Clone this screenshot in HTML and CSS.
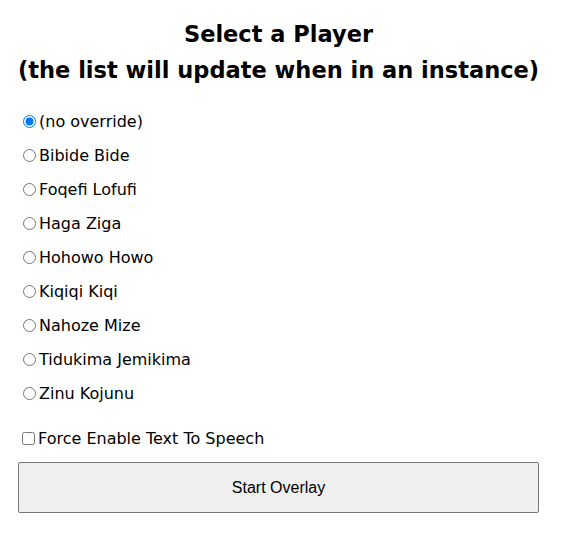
FILE: index.html
```html
<!DOCTYPE html>
<html>
<head>
<meta charset="utf-8">
<link rel="stylesheet" href="styles.css">
</head>
<body>
<div class="page">
  <h2 class="title">Select a Player<br>(the list will update when in an instance)</h2>
  <div class="players">
    <label class="row"><input type="radio" name="p" checked>(no override)</label>
    <label class="row"><input type="radio" name="p">Bibide Bide</label>
    <label class="row"><input type="radio" name="p">Foqefi Lofufi</label>
    <label class="row"><input type="radio" name="p">Haga Ziga</label>
    <label class="row"><input type="radio" name="p">Hohowo Howo</label>
    <label class="row"><input type="radio" name="p">Kiqiqi Kiqi</label>
    <label class="row"><input type="radio" name="p">Nahoze Mize</label>
    <label class="row"><input type="radio" name="p">Tidukima Jemikima</label>
    <label class="row"><input type="radio" name="p">Zinu Kojunu</label>
  </div>
  <label class="check"><input type="checkbox">Force Enable Text To Speech</label>
  <button class="start">Start Overlay</button>
</div>
</body>
</html>
```
FILE: styles.css
```css
html, body { margin: 0; padding: 0; background: #fff; }
body {
  font-family: "DejaVu Sans", "Noto Sans", sans-serif;
  color: #000;
}
.page {
  width: 521px;
  padding: 0 0 0 18px;
  display: flex;
  flex-direction: column;
}
.title {
  margin: 16px 0 16px;
  text-align: center;
  font-size: 22.5px;
  line-height: 36px;
  font-weight: bold;
  white-space: nowrap;
}
.players {
  display: flex;
  flex-direction: column;
}
.row {
  display: flex;
  align-items: center;
  height: 34px;
  font-size: 16px;
}
.row input { margin: 0 3px 0 5px; width: 13px; height: 13px; }
.check {
  display: flex;
  align-items: center;
  height: 24px;
  margin-top: 16px;
  font-size: 16px;
}
.check input { margin: 0 3px 0 4px; width: 13px; height: 13px; }
.start {
  margin-top: 12px;
  height: 51px;
  width: 521px;
  font-family: "Liberation Sans", Arial, sans-serif;
  font-size: 16px;
  background: #efefef;
  border: 1px solid #767676;
  border-radius: 2px;
  color: #000;
}
```
